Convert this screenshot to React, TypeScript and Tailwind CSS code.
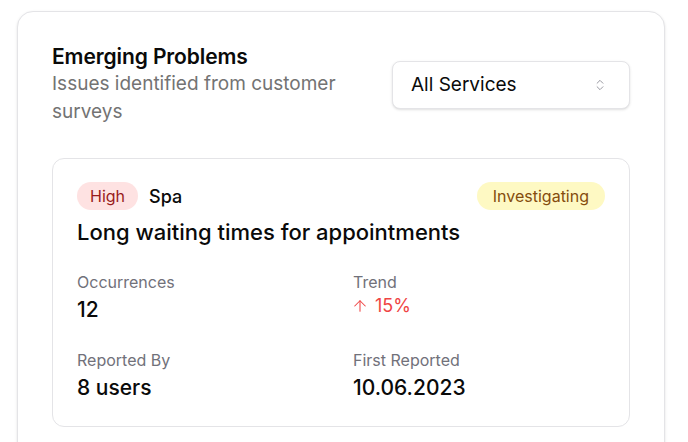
import React from "react";
import { ArrowUp, ChevronsUpDown } from "lucide-react";

export default function App() {
  return (
    <div
      className="min-h-screen bg-white pl-[17px] pt-[11px]"
      style={{ fontFamily: "Inter, 'Noto Sans', sans-serif" }}
    >
      <div className="w-[648px] rounded-2xl border border-[#e4e4e7] bg-white px-[34px] pt-8 pb-8 shadow-sm">
        <div className="flex items-center justify-between">
          <div className="w-[310px]">
            <h2 className="text-[21px] font-semibold leading-[26px] tracking-[-0.005em] text-[#0a0a0a]">
              Emerging Problems
            </h2>
            <p className="text-[19px] leading-[28px] text-[#737373]">
              Issues identified from customer surveys
            </p>
          </div>
          <div className="flex h-[48px] w-[238px] items-center justify-between rounded-lg border border-[#e4e4e7] bg-white pl-[18px] pr-[22px] shadow-sm">
            <span className="text-[19px] text-[#0a0a0a]">All Services</span>
            <ChevronsUpDown size={14} strokeWidth={1.5} className="text-[#8a8a93]" />
          </div>
        </div>

        <div className="mt-8 rounded-xl border border-[#e4e4e7] bg-white px-6 pt-[23px] pb-6">
          <div className="flex items-center justify-between">
            <div className="flex items-center gap-[11px]">
              <span className="rounded-full bg-[#fee2e2] px-[13px] py-0.5 text-[16px] leading-[24px] text-[#991b1b]">
                High
              </span>
              <span className="text-[18px] font-medium text-[#0a0a0a]">Spa</span>
            </div>
            <span className="rounded-full bg-[#fef9c3] px-[16px] py-0.5 text-[16px] leading-[24px] text-[#854d0e]">
              Investigating
            </span>
          </div>
          <h3 className="mt-2 text-[22px] font-medium leading-[28px] text-[#0a0a0a]">
            Long waiting times for appointments
          </h3>
          <div className="mt-6 grid grid-cols-2 gap-x-6 gap-y-6">
            <div>
              <div className="text-[16px] leading-[24px] text-[#71717a]">Occurrences</div>
              <div className="mt-0.5 text-[21px] font-medium leading-[28px] text-[#0a0a0a]">12</div>
            </div>
            <div>
              <div className="text-[16px] leading-[24px] text-[#71717a]">Trend</div>
              <div className="flex items-center gap-[6px] text-[18px] leading-[24px] text-[#ef4444]">
                <ArrowUp size={18} strokeWidth={1.4} className="-ml-[2px]" />
                <span>15%</span>
              </div>
            </div>
            <div>
              <div className="text-[16px] leading-[24px] text-[#71717a]">Reported By</div>
              <div className="mt-0.5 text-[21px] font-medium leading-[28px] text-[#0a0a0a]">8 users</div>
            </div>
            <div>
              <div className="text-[16px] leading-[24px] text-[#71717a]">First Reported</div>
              <div className="mt-0.5 text-[21px] font-medium leading-[28px] text-[#0a0a0a]">10.06.2023</div>
            </div>
          </div>
        </div>
      </div>
    </div>
  );
}
